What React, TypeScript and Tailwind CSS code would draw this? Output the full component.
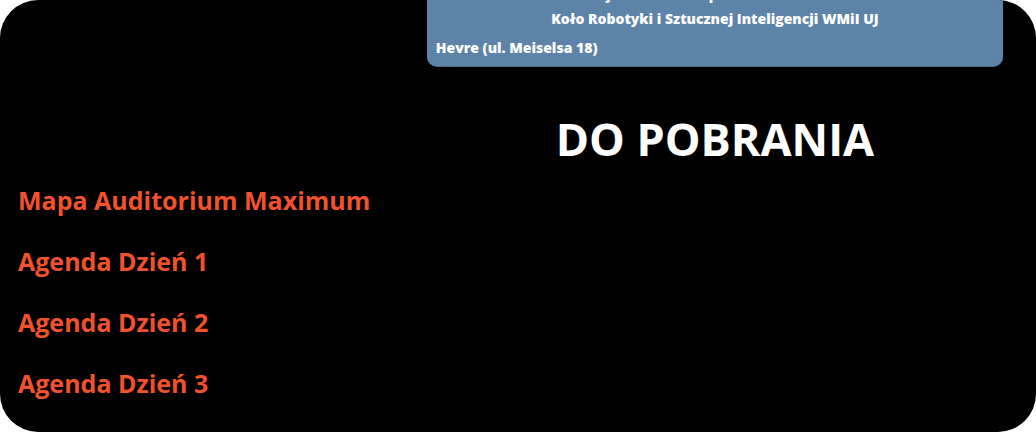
const downloads = [
  "Mapa Auditorium Maximum",
  "Agenda Dzień 1",
  "Agenda Dzień 2",
  "Agenda Dzień 3",
];

export default function App() {
  return (
    <main className="overflow-hidden rounded-[38px] bg-black pb-[18px] font-['Open_Sans',sans-serif] text-white">
      <div className="ml-[41.2%] mr-[33px]">
        <section className="flex flex-col overflow-hidden rounded-b-[10px] border-b border-[#4a6c8c] bg-[#5d84a8] px-[9px] pb-2 text-[14px] font-extrabold leading-[20px]">
          <div className="flex h-[9px] items-end justify-center gap-[98px] pr-[106px]">
            <span className="h-[24px]">j</span>
            <span className="h-[24px]">p</span>
          </div>
          <p className="text-center">Koło Robotyki i Sztucznej Inteligencji WMiI UJ</p>
          <p className="mt-[9px]">Hevre (ul. Meiselsa 18)</p>
        </section>
        <h1 className="mt-[41px] text-center text-[45px] font-bold leading-[62px]">DO POBRANIA</h1>
      </div>
      <ul className="ml-[18px] text-[25px] font-bold leading-[61px] text-[#f1512d]">
        {downloads.map((name) => (
          <li key={name}>
            <a href="#">{name}</a>
          </li>
        ))}
      </ul>
    </main>
  );
}
